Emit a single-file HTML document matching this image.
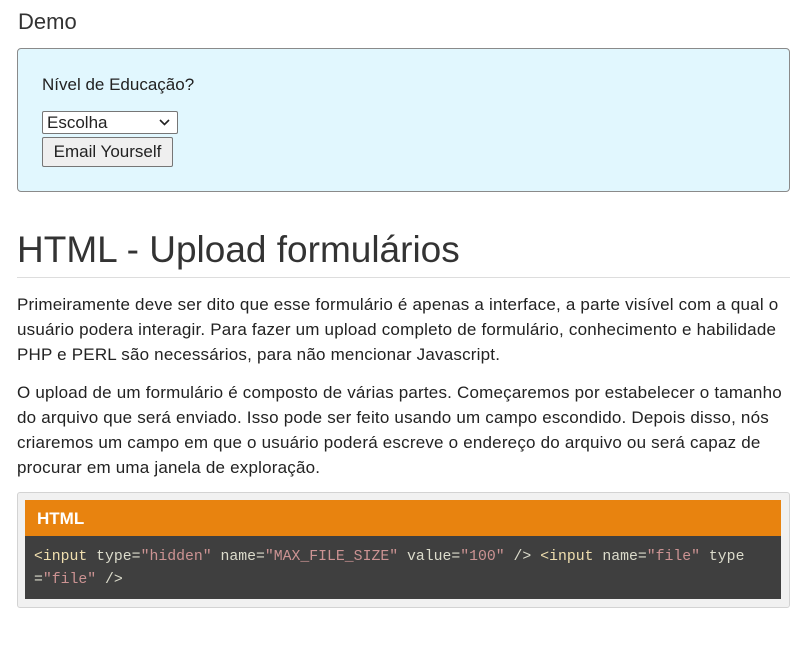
<!DOCTYPE html>
<html><head><meta charset="utf-8"><style>
body{margin:0;width:803px;height:648px;overflow:hidden;background:#fff;font-family:"Liberation Sans",Arial,sans-serif;color:#222}
.t{position:absolute;left:18px;top:9px;font-size:22px;color:#333}
.box{position:absolute;left:17px;top:48px;width:771px;height:142px;background:#e1f7fe;border:1px solid #8a8a8a;border-radius:4px}
.lbl{position:absolute;left:42px;top:75px;font-size:17px}
.sel{position:absolute;left:42px;top:111px;width:136px;height:23px;border:1px solid #767676;border-radius:2px;background:#fff;font-size:17px;box-sizing:border-box;padding-left:4px;line-height:21px}
.sel svg{position:absolute;right:7px;top:7px}
.btn{position:absolute;left:42px;top:137px;width:131px;height:30px;border:1px solid #767676;border-radius:2px;background:#efefef;font-size:17px;box-sizing:border-box;text-align:center;line-height:28px;white-space:nowrap}
h1{position:absolute;left:17px;top:228px;margin:0;font-weight:normal;font-size:37px;color:#333;line-height:44px}
.hr{position:absolute;left:17px;top:277px;width:773px;height:1px;background:#ddd}
p{position:absolute;left:17px;margin:0;font-size:17px;letter-spacing:0.2px;line-height:25px;color:#222;white-space:nowrap}
.cb{position:absolute;left:17px;top:492px;width:771px;height:114px;border:1px solid #d3d3d3;border-radius:3px;background:#f1f1f1}
.hd{position:absolute;left:25px;top:500px;width:756px;height:36px;background:#e8830f;color:#fff;font-weight:bold;font-size:17px;line-height:37px;padding-left:12px;box-sizing:border-box}
.code{position:absolute;left:25px;top:536px;width:756px;height:63px;background:#3f3f3f;box-sizing:border-box;padding:10px 0 0 9px;font-family:"Liberation Mono","DejaVu Sans Mono",monospace;font-size:14.8px;line-height:23px;color:#dcdccc;white-space:nowrap}
.k{color:#f0dfaf}.v{color:#cc9393}
</style></head><body>
<div class="t">Demo</div>
<div class="box"></div>
<div class="lbl">Nível de Educação?</div>
<div class="sel">Escolha<svg width="11" height="7" viewBox="0 0 11 7"><path d="M1 1l4.5 4.5L10 1" stroke="#222" stroke-width="1.6" fill="none"/></svg></div>
<div class="btn">Email Yourself</div>
<h1>HTML - Upload formulários</h1>
<div class="hr"></div>
<p style="top:292px">Primeiramente deve ser dito que esse formulário é apenas a interface, a parte visível com a qual o<br>usuário podera interagir. Para fazer um upload completo de formulário, conhecimento e habilidade<br>PHP e PERL são necessários, para não mencionar Javascript.</p>
<p style="top:380px">O upload de um formulário é composto de várias partes. Começaremos por estabelecer o tamanho<br>do arquivo que será enviado. Isso pode ser feito usando um campo escondido. Depois disso, nós<br>criaremos um campo em que o usuário poderá escreve o endereço do arquivo ou será capaz de<br>procurar em uma janela de exploração.</p>
<div class="cb"></div>
<div class="hd">HTML</div>
<div class="code"><span class="k">&lt;input</span> type=<span class="v">"hidden"</span> name=<span class="v">"MAX_FILE_SIZE"</span> value=<span class="v">"100"</span> /&gt; <span class="k">&lt;input</span> name=<span class="v">"file"</span> type<br>=<span class="v">"file"</span> /&gt;</div>
</body></html>
